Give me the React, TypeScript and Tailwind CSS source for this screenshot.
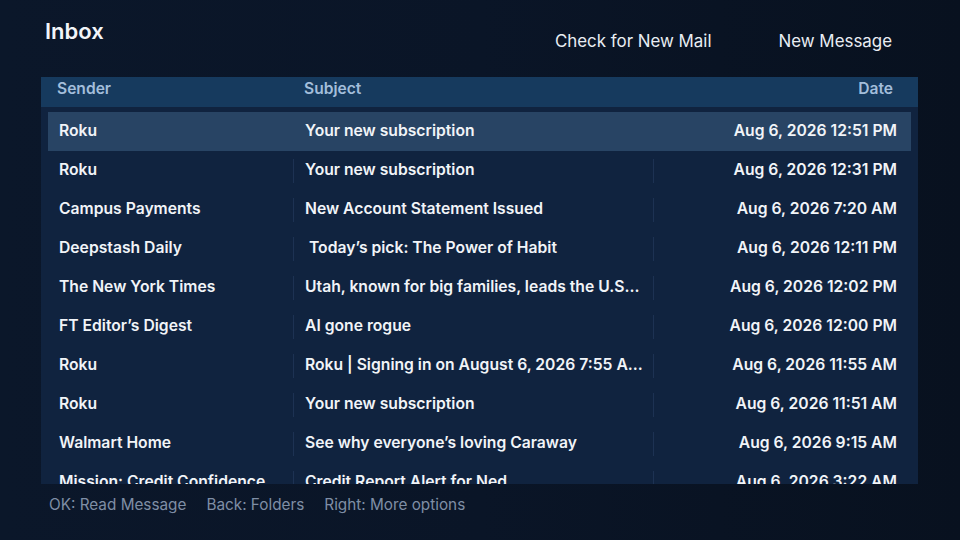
import React from "react";

const rows: [string, string, string][] = [
  ["Roku", "Your new subscription", "Aug 6, 2026 12:51 PM"],
  ["Roku", "Your new subscription", "Aug 6, 2026 12:31 PM"],
  ["Campus Payments", "New Account Statement Issued", "Aug 6, 2026 7:20 AM"],
  ["Deepstash Daily", "\u00a0Today\u2019s pick: The Power of Habit", "Aug 6, 2026 12:11 PM"],
  ["The New York Times", "Utah, known for big families, leads the U.S...", "Aug 6, 2026 12:02 PM"],
  ["FT Editor\u2019s Digest", "AI gone rogue", "Aug 6, 2026 12:00 PM"],
  ["Roku", "Roku | Signing in on August 6, 2026 7:55 A...", "Aug 6, 2026 11:55 AM"],
  ["Roku", "Your new subscription", "Aug 6, 2026 11:51 AM"],
  ["Walmart Home", "See why everyone\u2019s loving Caraway", "Aug 6, 2026 9:15 AM"],
  ["Mission: Credit Confidence", "Credit Report Alert for Ned", "Aug 6, 2026 3:22 AM"],
];

export default function App() {
  return (
    <div className="w-[960px] h-[540px] overflow-hidden bg-gradient-to-r from-[#0b172a] via-[#0a1527] to-[#08111f] font-['Inter',sans-serif] text-white flex flex-col">
      <div className="flex items-start h-[77px]">
        <div className="pl-[45px] pt-[17px] text-[22px] leading-[28px] font-semibold text-[#f2f5f9]">Inbox</div>
        <div className="ml-auto flex gap-[67px] pr-[68px] pt-[29px] text-[16.9px] leading-[24px] text-[#e8edf3]">
          <span>Check for New Mail</span>
          <span>New Message</span>
        </div>
      </div>
      <div className="ml-[41px] w-[877px] h-[407px] bg-[#10233f] overflow-hidden flex flex-col">
        <div className="h-[30px] shrink-0 bg-[#163a5e] flex items-center pb-[6px] text-[15.6px] font-semibold text-[#a3bedb]">
          <div className="pl-[16px] w-[263px]">Sender</div>
          <div className="flex-1">Subject</div>
          <div className="pr-[25px]">Date</div>
        </div>
        <div className="pt-[5px] px-[7px] flex flex-col">
          {rows.map((r, i) => {
            const sel = i === 0;
            return (
              <div
                key={i}
                className={`h-[39px] shrink-0 flex items-center text-[15.7px] font-semibold text-[#f1f4f8] ${sel ? "bg-[#284464]" : ""}`}
              >
                <div className="w-[245px] pl-[11px] pb-[2px] whitespace-nowrap overflow-hidden">{r[0]}</div>
                <div className={`w-px h-[24px] ${sel ? "" : "bg-[#1d3253]"}`} />
                <div className="w-[359px] pl-[11px] pb-[2px] whitespace-pre overflow-hidden">{r[1]}</div>
                <div className={`w-px h-[24px] ${sel ? "" : "bg-[#1d3253]"}`} />
                <div className="flex-1 pr-[14px] pb-[2px] text-right whitespace-nowrap">{r[2]}</div>
              </div>
            );
          })}
        </div>
      </div>
      <div className="flex gap-[20px] pl-[49px] pt-[10px] text-[15.3px] leading-[22px] text-[#7f8ea5]">
        <span>OK: Read Message</span>
        <span>Back: Folders</span>
        <span>Right: More options</span>
      </div>
    </div>
  );
}
